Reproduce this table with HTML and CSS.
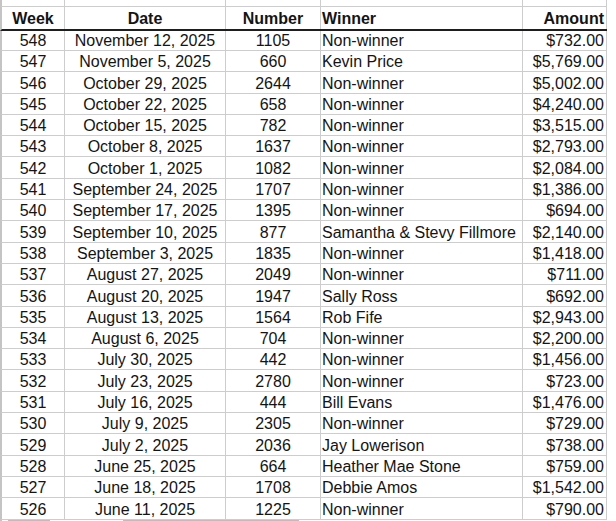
FILE: index.html
```html
<!DOCTYPE html>
<html>
<head>
<meta charset="utf-8">
<link rel="stylesheet" href="styles.css">
</head>
<body>
<div class="sheet">
  <div class="row strip">
    <div class="c"></div><div class="c"></div><div class="c"></div><div class="c"></div><div class="c"></div>
  </div>
  <div class="row head">
    <div class="c ctr">Week</div>
    <div class="c ctr">Date</div>
    <div class="c ctr">Number</div>
    <div class="c lft">Winner</div>
    <div class="c rgt">Amount</div>
  </div>
  <div id="body"></div>
  <div class="foot"><span class="seg s1"></span><span class="seg s2"></span></div>
</div>
<script>
const data = [
["548","November 12, 2025","1105","Non-winner","$732.00"],
["547","November 5, 2025","660","Kevin Price","$5,769.00"],
["546","October 29, 2025","2644","Non-winner","$5,002.00"],
["545","October 22, 2025","658","Non-winner","$4,240.00"],
["544","October 15, 2025","782","Non-winner","$3,515.00"],
["543","October 8, 2025","1637","Non-winner","$2,793.00"],
["542","October 1, 2025","1082","Non-winner","$2,084.00"],
["541","September 24, 2025","1707","Non-winner","$1,386.00"],
["540","September 17, 2025","1395","Non-winner","$694.00"],
["539","September 10, 2025","877","Samantha &amp; Stevy Fillmore","$2,140.00"],
["538","September 3, 2025","1835","Non-winner","$1,418.00"],
["537","August 27, 2025","2049","Non-winner","$711.00"],
["536","August 20, 2025","1947","Sally Ross","$692.00"],
["535","August 13, 2025","1564","Rob Fife","$2,943.00"],
["534","August 6, 2025","704","Non-winner","$2,200.00"],
["533","July 30, 2025","442","Non-winner","$1,456.00"],
["532","July 23, 2025","2780","Non-winner","$723.00"],
["531","July 16, 2025","444","Bill Evans","$1,476.00"],
["530","July 9, 2025","2305","Non-winner","$729.00"],
["529","July 2, 2025","2036","Jay Lowerison","$738.00"],
["528","June 25, 2025","664","Heather Mae Stone","$759.00"],
["527","June 18, 2025","1708","Debbie Amos","$1,542.00"],
["526","June 11, 2025","1225","Non-winner","$790.00"]
];
const cls = ["ctr","ctr","ctr","lft","rgt"];
let html = "";
data.forEach((r, i) => {
  html += '<div class="row data' + (i === 0 ? ' first' : '') + '">' +
    r.map((v, j) => '<div class="c ' + cls[j] + '">' + v + '</div>').join('') + '</div>';
});
document.getElementById("body").innerHTML = html;
</script>
</body>
</html>
```

FILE: styles.css
```css
html, body {
  margin: 0;
  padding: 0;
  background: #fff;
}
body {
  font-family: "Liberation Sans", Arial, sans-serif;
  font-size: 16px;
  color: #141414;
  width: 616px;
  height: 521px;
  overflow: hidden;
}
.sheet {
  width: 607px;
}
.row {
  display: grid;
  grid-template-columns: 63px 161px 95px 202px 84px;
  border-left: 2px solid #c4c4c4;
  border-bottom: 1px solid #cdcdcd;
  box-sizing: border-box;
}
.c {
  border-right: 1px solid #cdcdcd;
  box-sizing: border-box;
  display: flex;
  align-items: flex-end;
  white-space: nowrap;
  overflow: hidden;
  line-height: normal;
}
.ctr { justify-content: center; }
.lft { justify-content: flex-start; padding-left: 1px; }
.rgt { justify-content: flex-end; padding-right: 2px; }
.strip {
  height: 7px;
}
.head {
  height: 24px;
  border-bottom: 2px solid #1e1e1e;
  font-weight: bold;
}
.head .c {
  padding-bottom: 1px;
}
.data {
  height: 21.3px;
}
.data.first {
  height: 20px;
}
.foot {
  display: flex;
  height: 3px;
  border-left: 2px solid #c4c4c4;
  position: relative;
}
.seg {
  display: block;
  height: 1px;
  background: #bdbdbd;
  margin-top: 0px;
}
.s1 { width: 42px; margin-left: 6px; }
.s2 { width: 176px; margin-left: 73px; }
```
